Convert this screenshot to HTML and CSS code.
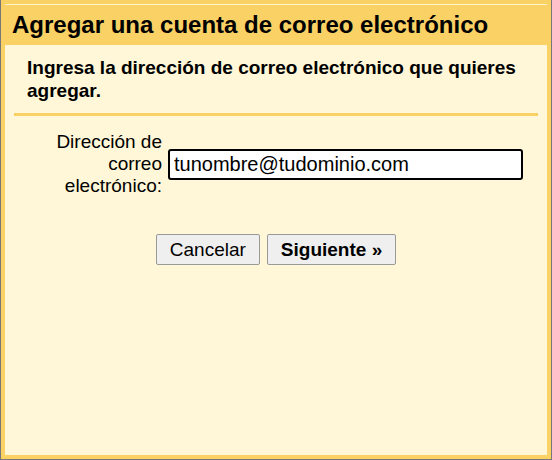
FILE: index.html
```html
<!DOCTYPE html>
<html lang="es">
<head>
    <meta charset="UTF-8">
    <meta name="viewport" content="width=device-width, initial-scale=1.0">
    <title>Agregar una cuenta de correo electrónico</title>
    <link rel="stylesheet" href="styles.css">
</head>
<body>
    <div class="dialog">
        <div class="dialog-title">Agregar una cuenta de correo electrónico</div>

        <div class="dialog-body">
            <p class="intro">Ingresa la dirección de correo electrónico que quieres agregar.</p>
            <hr class="divider">

            <div class="form-row">
                <label for="email" class="field-label">Dirección de correo electrónico:</label>
                <input type="text" id="email" class="field-input" value="tunombre@tudominio.com">
            </div>

            <div class="buttons">
                <button class="button">Cancelar</button>
                <button class="button button-primary">Siguiente »</button>
            </div>
        </div>
    </div>
</body>
</html>
```

FILE: styles.css
```css
:root {
    --frame-color: #fad165;
    --panel-color: #fff7d7;
    --outside-color: #777;
    --text-color: #000;
}

html, body {
    height: 100%;
}

body {
    margin: 0;
    padding: 0 1px 1px 1px;
    box-sizing: border-box;
    background: var(--outside-color);
    font-family: "Liberation Sans", Arial, sans-serif;
    color: var(--text-color);
}

.dialog {
    box-sizing: border-box;
    height: 100%;
    border: 4px solid var(--frame-color);
    background: var(--panel-color);
}

.dialog-title {
    height: 40px;
    line-height: 40px;
    padding-left: 7px;
    border-top: 1px solid #fff3cc;
    background: var(--frame-color);
    font-size: 24px;
    font-weight: bold;
    white-space: nowrap;
}

.dialog-body {
    padding: 0 9px;
}

.intro {
    margin: 11px 0 0;
    padding: 0 13px;
    font-size: 19px;
    line-height: 23px;
    font-weight: bold;
}

.divider {
    height: 3px;
    margin: 11px 0 0;
    border: 0;
    background: var(--frame-color);
}

.form-row {
    display: flex;
    align-items: center;
    gap: 6px;
    margin-top: 15px;
}

.field-label {
    box-sizing: border-box;
    width: 148px;
    padding-left: 40px;
    text-align: right;
    font-size: 19px;
    line-height: 22px;
}

.field-input {
    box-sizing: border-box;
    width: 355px;
    height: 31px;
    padding: 0 4px;
    border: 2px solid #000;
    border-radius: 3px;
    background: #fff;
    font-family: inherit;
    font-size: 20px;
    color: var(--text-color);
}

.buttons {
    display: flex;
    justify-content: center;
    gap: 7px;
    margin-top: 37px;
}

.button {
    box-sizing: border-box;
    height: 31px;
    padding: 0 13px;
    border: 1px solid #999;
    border-radius: 2px;
    background: #efefef;
    font-family: inherit;
    font-size: 19px;
    color: var(--text-color);
}

.button-primary {
    font-weight: bold;
}
```
